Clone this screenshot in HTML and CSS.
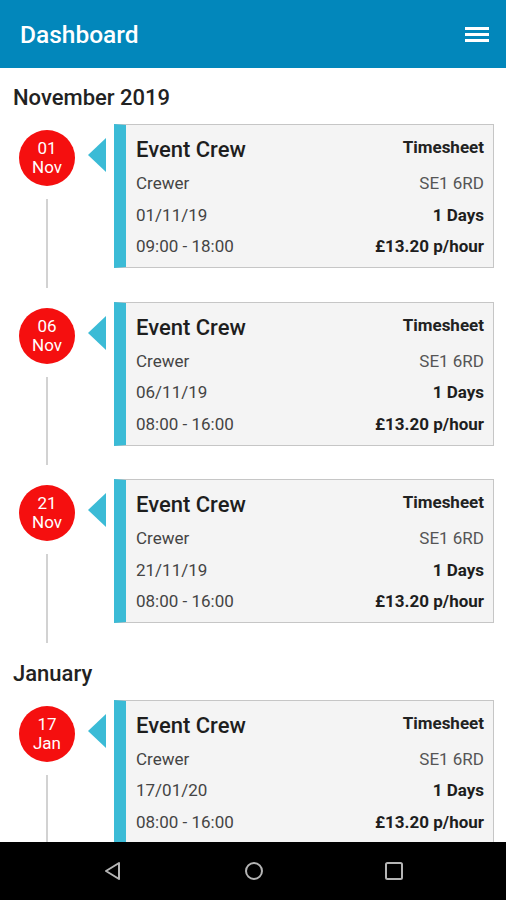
FILE: index.html
```html
<!DOCTYPE html>
<html lang="en">
<head>
    <meta charset="UTF-8">
    <meta name="viewport" content="width=device-width, initial-scale=1.0">
    <title>Dashboard</title>
    <link rel="stylesheet" href="styles.css">
</head>
<body>
    <header class="app-bar">
        <h1>Dashboard</h1>
        <svg class="menu-icon" width="24" height="16" viewBox="0 0 24 16">
            <rect x="0" y="0" width="24" height="3" fill="#fff"/>
            <rect x="0" y="6" width="24" height="3" fill="#fff"/>
            <rect x="0" y="12" width="24" height="3" fill="#fff"/>
        </svg>
    </header>

    <main class="content">
        <h2 class="month">November 2019</h2>

        <div class="event">
            <div class="timeline">
                <div class="date-badge"><span>01</span><span>Nov</span></div>
                <div class="line"></div>
            </div>
            <div class="pointer"></div>
            <div class="card">
                <div class="card-head">
                    <span class="title">Event Crew</span>
                    <span class="type">Timesheet</span>
                </div>
                <div class="row"><span>Crewer</span><span class="muted">SE1 6RD</span></div>
                <div class="row"><span>01/11/19</span><strong>1 Days</strong></div>
                <div class="row"><span>09:00 - 18:00</span><strong>£13.20 p/hour</strong></div>
            </div>
        </div>

        <div class="event">
            <div class="timeline">
                <div class="date-badge"><span>06</span><span>Nov</span></div>
                <div class="line"></div>
            </div>
            <div class="pointer"></div>
            <div class="card">
                <div class="card-head">
                    <span class="title">Event Crew</span>
                    <span class="type">Timesheet</span>
                </div>
                <div class="row"><span>Crewer</span><span class="muted">SE1 6RD</span></div>
                <div class="row"><span>06/11/19</span><strong>1 Days</strong></div>
                <div class="row"><span>08:00 - 16:00</span><strong>£13.20 p/hour</strong></div>
            </div>
        </div>

        <div class="event">
            <div class="timeline">
                <div class="date-badge"><span>21</span><span>Nov</span></div>
                <div class="line"></div>
            </div>
            <div class="pointer"></div>
            <div class="card">
                <div class="card-head">
                    <span class="title">Event Crew</span>
                    <span class="type">Timesheet</span>
                </div>
                <div class="row"><span>Crewer</span><span class="muted">SE1 6RD</span></div>
                <div class="row"><span>21/11/19</span><strong>1 Days</strong></div>
                <div class="row"><span>08:00 - 16:00</span><strong>£13.20 p/hour</strong></div>
            </div>
        </div>

        <h2 class="month">January</h2>

        <div class="event">
            <div class="timeline">
                <div class="date-badge"><span>17</span><span>Jan</span></div>
                <div class="line"></div>
            </div>
            <div class="pointer"></div>
            <div class="card">
                <div class="card-head">
                    <span class="title">Event Crew</span>
                    <span class="type">Timesheet</span>
                </div>
                <div class="row"><span>Crewer</span><span class="muted">SE1 6RD</span></div>
                <div class="row"><span>17/01/20</span><strong>1 Days</strong></div>
                <div class="row"><span>08:00 - 16:00</span><strong>£13.20 p/hour</strong></div>
            </div>
        </div>
    </main>

    <nav class="nav-bar">
        <svg width="20" height="20" viewBox="0 0 20 20">
            <path d="M16 2 L3 10 L16 18 Z" fill="none" stroke="#b5b5b5" stroke-width="2" stroke-linejoin="round"/>
        </svg>
        <svg width="20" height="20" viewBox="0 0 20 20">
            <circle cx="10" cy="10" r="8" fill="none" stroke="#b5b5b5" stroke-width="2"/>
        </svg>
        <svg width="20" height="20" viewBox="0 0 20 20">
            <rect x="2" y="2" width="16" height="16" rx="1.5" fill="none" stroke="#b5b5b5" stroke-width="2"/>
        </svg>
    </nav>
</body>
</html>
```

FILE: styles.css
```css
body {
    margin: 0;
    font-family: Roboto, "Liberation Sans", Arial, sans-serif;
    background-color: #fff;
    color: #222;
}
.app-bar {
    height: 68px;
    background-color: #0287bb;
    display: flex;
    align-items: center;
    justify-content: space-between;
    padding: 0 17px 0 20px;
}
.app-bar h1 {
    margin: 0;
    color: #fff;
    font-size: 24.5px;
    font-weight: 500;
}
.menu-icon {
    margin-top: 1px;
}
.content {
    padding-top: 13px;
}
.month {
    margin: 0 0 13px;
    padding: 4px 0 0 13px;
    font-size: 22px;
    line-height: 26px;
    font-weight: 500;
    color: #222;
}
.event {
    display: flex;
}
.timeline {
    width: 88px;
    flex-shrink: 0;
    display: flex;
    flex-direction: column;
    align-items: center;
    padding-left: 6px;
    box-sizing: border-box;
}
.date-badge {
    width: 56px;
    height: 56px;
    margin-top: 6px;
    border-radius: 50%;
    background-color: #f50f0f;
    color: #fff;
    display: flex;
    flex-direction: column;
    align-items: center;
    justify-content: center;
    font-size: 17px;
    line-height: 19px;
}
.line {
    flex: 1;
    width: 2px;
    margin: 13px 0 14px;
    background-color: #d2d2d2;
}
.pointer {
    width: 0;
    height: 0;
    margin-top: 14px;
    border-top: 17px solid transparent;
    border-bottom: 17px solid transparent;
    border-right: 18px solid #3bbbd6;
}
.card {
    flex: 1;
    margin: 0 12px 33.5px 8px;
    padding: 12px 9px 4px 10px;
    border: 1px solid #c6c6c6;
    border-left: 12px solid #3bbbd6;
    background-color: #f4f4f4;
    height: 144px;
    box-sizing: border-box;
}
.card-head {
    display: flex;
    justify-content: space-between;
    align-items: flex-start;
    margin-bottom: 5px;
}
.title {
    font-size: 22px;
    line-height: 26px;
    font-weight: 500;
    color: #1e1e1e;
}
.type {
    font-size: 17px;
    line-height: 20px;
    font-weight: bold;
    color: #222;
}
.row {
    display: flex;
    justify-content: space-between;
    font-size: 17px;
    line-height: 31.5px;
    color: #444;
}
.row strong {
    color: #1e1e1e;
}
.muted {
    color: #555;
}
.nav-bar {
    position: fixed;
    left: 0;
    right: 0;
    bottom: 0;
    height: 58px;
    background-color: #000;
    display: flex;
    align-items: center;
    justify-content: space-between;
    padding: 0 102px 0 103px;
}
```
